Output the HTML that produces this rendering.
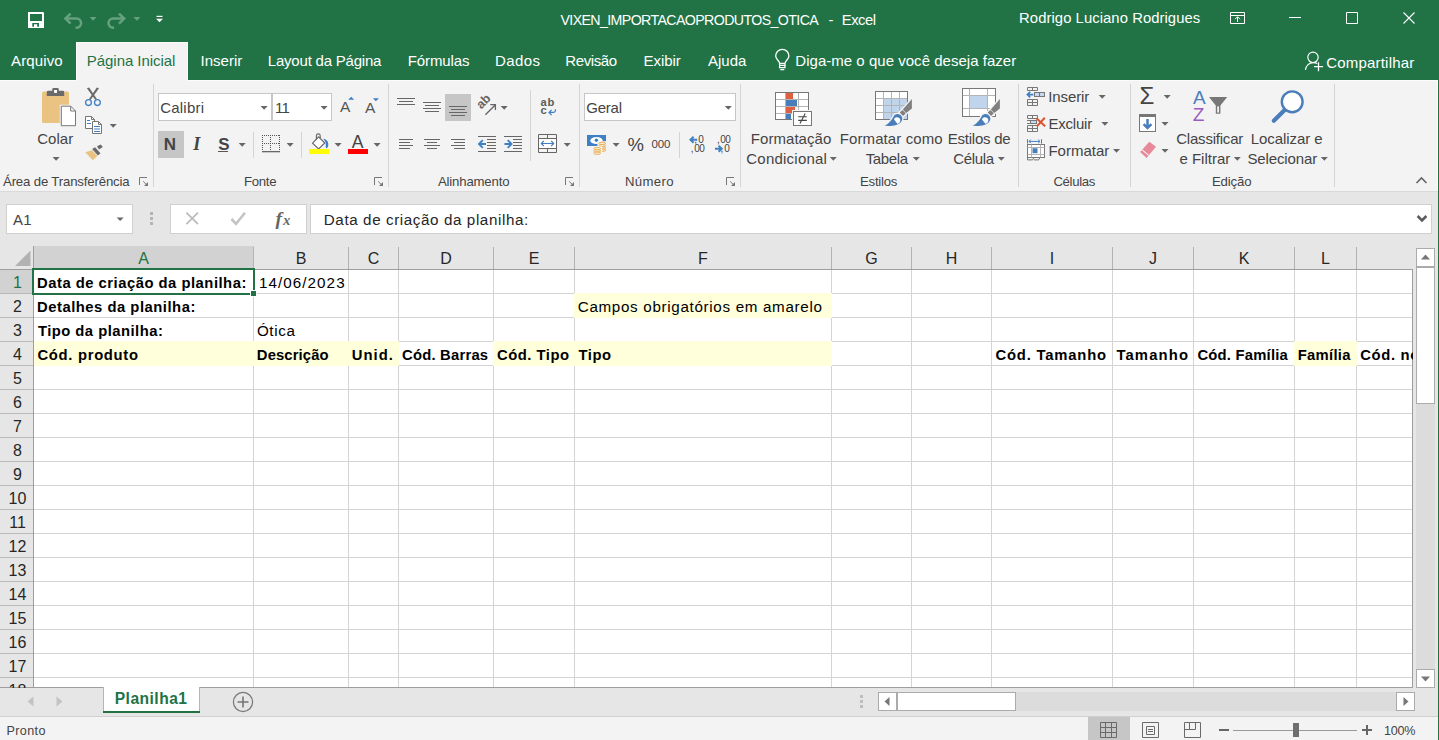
<!DOCTYPE html>
<html lang="pt-BR">
<head>
<meta charset="utf-8">
<title>VIXEN_IMPORTACAOPRODUTOS_OTICA - Excel</title>
<style>
html,body{margin:0;padding:0}
body{width:1439px;height:740px;overflow:hidden;background:#e6e6e6;position:relative;font-family:"Liberation Sans",sans-serif}
#app{position:absolute;left:0;top:0;width:1439px;height:740px;overflow:hidden}
#app div,#app span,#app svg{position:absolute;display:block}
#app span{white-space:pre;line-height:20px;height:20px}
</style>
</head>
<body>
<div id="app">
<div style="left:0px;top:0px;width:1439px;height:80px;background:#217346;"></div>
<div style="left:76px;top:42px;width:112px;height:38px;background:#f3f3f3;"></div>
<div style="left:0px;top:80px;width:1438px;height:111px;background:#f3f3f3;"></div>
<div style="left:0px;top:191px;width:1438px;height:1px;background:#d9d9d9;"></div>
<div style="left:0px;top:80px;width:77px;height:1px;background:#fcfcfc;"></div>
<div style="left:187px;top:80px;width:1251px;height:1px;background:#fcfcfc;"></div>
<div style="left:1437px;top:80px;width:1px;height:111px;background:#fcfcfc;"></div>
<div style="left:76px;top:42px;width:112px;height:1px;background:#fcfcfc;"></div>
<div style="left:76px;top:42px;width:1px;height:39px;background:#fcfcfc;"></div>
<div style="left:187px;top:42px;width:1px;height:39px;background:#fcfcfc;"></div>
<span style="left:560.44px;top:11px;line-height:18px;height:18px;font-size:14.2px;color:#ffffff;letter-spacing:-0.607px;">VIXEN_IMPORTACAOPRODUTOS_OTICA</span>
<span style="left:828.38px;top:11px;line-height:18px;height:18px;font-size:14.8px;color:#ffffff;">-</span>
<span style="left:841.81px;top:11px;line-height:18px;height:18px;font-size:14.8px;color:#ffffff;letter-spacing:-0.507px;">Excel</span>
<span style="left:1019.11px;top:9px;line-height:18px;height:18px;font-size:14.8px;color:#ffffff;letter-spacing:0.073px;">Rodrigo Luciano Rodrigues</span>
<span style="left:11.00px;top:51px;line-height:19px;height:19px;font-size:15px;color:#ffffff;letter-spacing:0.122px;">Arquivo</span>
<span style="left:86.81px;top:51px;line-height:19px;height:19px;font-size:15px;color:#217346;letter-spacing:-0.045px;">Página Inicial</span>
<span style="left:200.62px;top:51px;line-height:19px;height:19px;font-size:15px;color:#ffffff;letter-spacing:-0.009px;">Inserir</span>
<span style="left:267.81px;top:51px;line-height:19px;height:19px;font-size:15px;color:#ffffff;letter-spacing:-0.207px;">Layout da Página</span>
<span style="left:407.81px;top:51px;line-height:19px;height:19px;font-size:15px;color:#ffffff;letter-spacing:-0.118px;">Fórmulas</span>
<span style="left:495.11px;top:51px;line-height:19px;height:19px;font-size:15px;color:#ffffff;letter-spacing:0.357px;">Dados</span>
<span style="left:565.31px;top:51px;line-height:19px;height:19px;font-size:15px;color:#ffffff;letter-spacing:-0.402px;">Revisão</span>
<span style="left:643.51px;top:51px;line-height:19px;height:19px;font-size:15px;color:#ffffff;letter-spacing:-0.055px;">Exibir</span>
<span style="left:707.90px;top:51px;line-height:19px;height:19px;font-size:15px;color:#ffffff;letter-spacing:0.026px;">Ajuda</span>
<span style="left:795.31px;top:51px;line-height:19px;height:19px;font-size:15px;color:#ffffff;letter-spacing:0.027px;">Diga-me o que você deseja fazer</span>
<span style="left:1326.25px;top:53px;line-height:19px;height:19px;font-size:15px;color:#ffffff;letter-spacing:0.194px;">Compartilhar</span>
<div style="left:153px;top:84px;width:1px;height:103px;background:#d4d4d4;"></div>
<div style="left:388px;top:84px;width:1px;height:103px;background:#d4d4d4;"></div>
<div style="left:579px;top:84px;width:1px;height:103px;background:#d4d4d4;"></div>
<div style="left:740px;top:84px;width:1px;height:103px;background:#d4d4d4;"></div>
<div style="left:1018px;top:84px;width:1px;height:103px;background:#d4d4d4;"></div>
<div style="left:1130px;top:84px;width:1px;height:103px;background:#d4d4d4;"></div>
<div style="left:1334px;top:84px;width:1px;height:103px;background:#d4d4d4;"></div>
<div style="left:253px;top:132px;width:1px;height:26px;background:#d4d4d4;"></div>
<div style="left:301px;top:132px;width:1px;height:26px;background:#d4d4d4;"></div>
<div style="left:679px;top:132px;width:1px;height:26px;background:#d4d4d4;"></div>
<div style="left:530px;top:90px;width:1px;height:71px;background:#d4d4d4;"></div>
<span style="left:3.00px;top:173px;line-height:17px;height:17px;font-size:13.2px;color:#444444;letter-spacing:-0.157px;">Área de Transferência</span>
<span style="left:243.94px;top:173px;line-height:17px;height:17px;font-size:13.2px;color:#444444;letter-spacing:-0.290px;">Fonte</span>
<span style="left:438.00px;top:173px;line-height:17px;height:17px;font-size:13.2px;color:#444444;letter-spacing:-0.185px;">Alinhamento</span>
<span style="left:624.94px;top:173px;line-height:17px;height:17px;font-size:13.2px;color:#444444;letter-spacing:0.329px;">Número</span>
<span style="left:859.94px;top:173px;line-height:17px;height:17px;font-size:13.2px;color:#444444;letter-spacing:-0.223px;">Estilos</span>
<span style="left:1053.38px;top:173px;line-height:17px;height:17px;font-size:13.2px;color:#444444;letter-spacing:-0.320px;">Células</span>
<span style="left:1211.94px;top:173px;line-height:17px;height:17px;font-size:13.2px;color:#444444;letter-spacing:-0.153px;">Edição</span>
<span style="left:37.25px;top:129px;line-height:19px;height:19px;font-size:15px;color:#444444;letter-spacing:0.038px;">Colar</span>
<div style="left:158px;top:93px;width:114px;height:28px;background:#fff;border:1px solid #c6c6c6;box-sizing:border-box"></div>
<div style="left:272px;top:93px;width:60px;height:28px;background:#fff;border:1px solid #c6c6c6;box-sizing:border-box"></div>
<span style="left:160.25px;top:98px;line-height:19px;height:19px;font-size:15px;color:#444444;letter-spacing:0.200px;">Calibri</span>
<span style="left:274.88px;top:98px;line-height:19px;height:19px;font-size:15px;color:#444444;letter-spacing:-0.729px;">11</span>
<div style="left:158px;top:131px;width:26px;height:27px;background:#c6c6c6;"></div>
<span style="left:163.74px;top:134px;line-height:21px;height:21px;font-size:17px;color:#444;font-weight:700;">N</span>
<span style="left:193.28px;top:133px;line-height:22px;height:22px;font-size:18px;color:#444;font-weight:700;font-style:italic;font-family:'Liberation Serif',serif;">I</span>
<span style="left:218.33px;top:134px;line-height:21px;height:21px;font-size:17px;color:#444;font-weight:700;">S</span>
<div style="left:218px;top:151px;width:10px;height:1.3px;background:#555;"></div>
<div style="left:445px;top:94px;width:26px;height:27px;background:#c6c6c6;"></div>
<div style="left:584px;top:93px;width:152px;height:28px;background:#fff;border:1px solid #c6c6c6;box-sizing:border-box"></div>
<span style="left:586.25px;top:98px;line-height:19px;height:19px;font-size:15px;color:#444444;letter-spacing:-0.243px;">Geral</span>
<span style="left:627.42px;top:133px;line-height:23px;height:23px;font-size:18.5px;color:#444444;">%</span>
<span style="left:651.56px;top:137px;line-height:14px;height:14px;font-size:11.5px;color:#444444;letter-spacing:-0.177px;">000</span>
<span style="left:750.81px;top:129px;line-height:19px;height:19px;font-size:15px;color:#444444;letter-spacing:0.050px;">Formatação</span>
<span style="left:746.25px;top:149px;line-height:19px;height:19px;font-size:15px;color:#444444;letter-spacing:0.232px;">Condicional</span>
<span style="left:839.81px;top:129px;line-height:19px;height:19px;font-size:15px;color:#444444;letter-spacing:0.091px;">Formatar como</span>
<span style="left:865.69px;top:149px;line-height:19px;height:19px;font-size:15px;color:#444444;letter-spacing:-0.384px;">Tabela</span>
<span style="left:947.81px;top:129px;line-height:19px;height:19px;font-size:15px;color:#444444;letter-spacing:-0.243px;">Estilos de</span>
<span style="left:953.25px;top:149px;line-height:19px;height:19px;font-size:15px;color:#444444;letter-spacing:-0.361px;">Célula</span>
<span style="left:1048.22px;top:87px;line-height:19px;height:19px;font-size:15px;color:#444444;letter-spacing:-0.109px;">Inserir</span>
<span style="left:1048.41px;top:114px;line-height:19px;height:19px;font-size:15px;color:#444444;letter-spacing:-0.196px;">Excluir</span>
<span style="left:1048.41px;top:141px;line-height:19px;height:19px;font-size:15px;color:#444444;">Formatar</span>
<span style="left:1176.25px;top:129px;line-height:19px;height:19px;font-size:15px;color:#444444;letter-spacing:-0.218px;">Classificar</span>
<span style="left:1179.38px;top:149px;line-height:19px;height:19px;font-size:15px;color:#444444;">e Filtrar</span>
<span style="left:1250.81px;top:129px;line-height:19px;height:19px;font-size:15px;color:#444444;letter-spacing:-0.070px;">Localizar e</span>
<span style="left:1247.38px;top:149px;line-height:19px;height:19px;font-size:15px;color:#444444;letter-spacing:-0.112px;">Selecionar</span>
<div style="left:6px;top:204px;width:127px;height:30px;background:#fff;border:1px solid #d0d0d0;box-sizing:border-box"></div>
<div style="left:170px;top:204px;width:137px;height:30px;background:#fff;border:1px solid #d0d0d0;box-sizing:border-box"></div>
<div style="left:310px;top:204px;width:1122px;height:30px;background:#fff;border:1px solid #d0d0d0;box-sizing:border-box"></div>
<span style="left:13.00px;top:210px;line-height:19px;height:19px;font-size:15px;color:#444444;letter-spacing:0.370px;">A1</span>
<span style="left:323.81px;top:210px;line-height:19px;height:19px;font-size:15.2px;color:#262626;letter-spacing:0.597px;">Data de criação da planilha:</span>
<div style="left:150px;top:212px;width:3px;height:3px;background:#b4b4b4;"></div>
<div style="left:150px;top:217px;width:3px;height:3px;background:#b4b4b4;"></div>
<div style="left:150px;top:222px;width:3px;height:3px;background:#b4b4b4;"></div>
<div style="left:34px;top:270px;width:1378px;height:417px;background:#fff;"></div>
<div style="left:253px;top:270px;width:1px;height:417px;background:#d4d4d4;"></div>
<div style="left:348px;top:270px;width:1px;height:417px;background:#d4d4d4;"></div>
<div style="left:398px;top:270px;width:1px;height:417px;background:#d4d4d4;"></div>
<div style="left:493px;top:270px;width:1px;height:417px;background:#d4d4d4;"></div>
<div style="left:574px;top:270px;width:1px;height:417px;background:#d4d4d4;"></div>
<div style="left:831px;top:270px;width:1px;height:417px;background:#d4d4d4;"></div>
<div style="left:911px;top:270px;width:1px;height:417px;background:#d4d4d4;"></div>
<div style="left:991px;top:270px;width:1px;height:417px;background:#d4d4d4;"></div>
<div style="left:1112px;top:270px;width:1px;height:417px;background:#d4d4d4;"></div>
<div style="left:1193px;top:270px;width:1px;height:417px;background:#d4d4d4;"></div>
<div style="left:1294px;top:270px;width:1px;height:417px;background:#d4d4d4;"></div>
<div style="left:1356px;top:270px;width:1px;height:417px;background:#d4d4d4;"></div>
<div style="left:34px;top:293px;width:1378px;height:1px;background:#d4d4d4;"></div>
<div style="left:34px;top:317px;width:1378px;height:1px;background:#d4d4d4;"></div>
<div style="left:34px;top:341px;width:1378px;height:1px;background:#d4d4d4;"></div>
<div style="left:34px;top:365px;width:1378px;height:1px;background:#d4d4d4;"></div>
<div style="left:34px;top:389px;width:1378px;height:1px;background:#d4d4d4;"></div>
<div style="left:34px;top:413px;width:1378px;height:1px;background:#d4d4d4;"></div>
<div style="left:34px;top:437px;width:1378px;height:1px;background:#d4d4d4;"></div>
<div style="left:34px;top:461px;width:1378px;height:1px;background:#d4d4d4;"></div>
<div style="left:34px;top:485px;width:1378px;height:1px;background:#d4d4d4;"></div>
<div style="left:34px;top:509px;width:1378px;height:1px;background:#d4d4d4;"></div>
<div style="left:34px;top:533px;width:1378px;height:1px;background:#d4d4d4;"></div>
<div style="left:34px;top:557px;width:1378px;height:1px;background:#d4d4d4;"></div>
<div style="left:34px;top:581px;width:1378px;height:1px;background:#d4d4d4;"></div>
<div style="left:34px;top:605px;width:1378px;height:1px;background:#d4d4d4;"></div>
<div style="left:34px;top:629px;width:1378px;height:1px;background:#d4d4d4;"></div>
<div style="left:34px;top:653px;width:1378px;height:1px;background:#d4d4d4;"></div>
<div style="left:34px;top:677px;width:1378px;height:1px;background:#d4d4d4;"></div>
<div style="left:33px;top:341px;width:366px;height:25px;background:#ffffdc;"></div>
<div style="left:493px;top:341px;width:339px;height:25px;background:#ffffdc;"></div>
<div style="left:574px;top:293px;width:258px;height:25px;background:#ffffdc;"></div>
<div style="left:1294px;top:341px;width:63px;height:25px;background:#ffffdc;"></div>
<div style="left:33px;top:341px;width:1px;height:25px;background:#9e9e9e;"></div>
<div style="left:34px;top:246px;width:220px;height:22px;background:#d2d2d2;"></div>
<div style="left:0px;top:270px;width:33px;height:23px;background:#d2d2d2;"></div>
<div style="left:0px;top:269px;width:1413px;height:1px;background:#9e9e9e;"></div>
<div style="left:33px;top:246px;width:1px;height:441px;background:#9e9e9e;"></div>
<div style="left:253px;top:247px;width:1px;height:22px;background:#b3b3b3;"></div>
<div style="left:348px;top:247px;width:1px;height:22px;background:#b3b3b3;"></div>
<div style="left:398px;top:247px;width:1px;height:22px;background:#b3b3b3;"></div>
<div style="left:493px;top:247px;width:1px;height:22px;background:#b3b3b3;"></div>
<div style="left:574px;top:247px;width:1px;height:22px;background:#b3b3b3;"></div>
<div style="left:831px;top:247px;width:1px;height:22px;background:#b3b3b3;"></div>
<div style="left:911px;top:247px;width:1px;height:22px;background:#b3b3b3;"></div>
<div style="left:991px;top:247px;width:1px;height:22px;background:#b3b3b3;"></div>
<div style="left:1112px;top:247px;width:1px;height:22px;background:#b3b3b3;"></div>
<div style="left:1193px;top:247px;width:1px;height:22px;background:#b3b3b3;"></div>
<div style="left:1294px;top:247px;width:1px;height:22px;background:#b3b3b3;"></div>
<div style="left:1356px;top:247px;width:1px;height:22px;background:#b3b3b3;"></div>
<div style="left:0px;top:293px;width:33px;height:1px;background:#b9b9b9;"></div>
<div style="left:0px;top:317px;width:33px;height:1px;background:#b9b9b9;"></div>
<div style="left:0px;top:341px;width:33px;height:1px;background:#b9b9b9;"></div>
<div style="left:0px;top:365px;width:33px;height:1px;background:#b9b9b9;"></div>
<div style="left:0px;top:389px;width:33px;height:1px;background:#b9b9b9;"></div>
<div style="left:0px;top:413px;width:33px;height:1px;background:#b9b9b9;"></div>
<div style="left:0px;top:437px;width:33px;height:1px;background:#b9b9b9;"></div>
<div style="left:0px;top:461px;width:33px;height:1px;background:#b9b9b9;"></div>
<div style="left:0px;top:485px;width:33px;height:1px;background:#b9b9b9;"></div>
<div style="left:0px;top:509px;width:33px;height:1px;background:#b9b9b9;"></div>
<div style="left:0px;top:533px;width:33px;height:1px;background:#b9b9b9;"></div>
<div style="left:0px;top:557px;width:33px;height:1px;background:#b9b9b9;"></div>
<div style="left:0px;top:581px;width:33px;height:1px;background:#b9b9b9;"></div>
<div style="left:0px;top:605px;width:33px;height:1px;background:#b9b9b9;"></div>
<div style="left:0px;top:629px;width:33px;height:1px;background:#b9b9b9;"></div>
<div style="left:0px;top:653px;width:33px;height:1px;background:#b9b9b9;"></div>
<div style="left:0px;top:677px;width:33px;height:1px;background:#b9b9b9;"></div>
<div style="left:1412px;top:269px;width:1px;height:418px;background:#9e9e9e;"></div>
<div style="left:0px;top:687px;width:1413px;height:1px;background:#9e9e9e;"></div>
<svg style="left:14px;top:250px;" width="17" height="17" viewBox="0 0 17 17"><path d="M16.5 0.5V16H1z" fill="#b2b2b2"/></svg>
<span style="left:123.5px;top:249px;width:40px;text-align:center;font-size:16px;line-height:20px;color:#217346">A</span>
<span style="left:281.0px;top:249px;width:40px;text-align:center;font-size:16px;line-height:20px;color:#262626">B</span>
<span style="left:353.5px;top:249px;width:40px;text-align:center;font-size:16px;line-height:20px;color:#262626">C</span>
<span style="left:426.0px;top:249px;width:40px;text-align:center;font-size:16px;line-height:20px;color:#262626">D</span>
<span style="left:514.0px;top:249px;width:40px;text-align:center;font-size:16px;line-height:20px;color:#262626">E</span>
<span style="left:683.0px;top:249px;width:40px;text-align:center;font-size:16px;line-height:20px;color:#262626">F</span>
<span style="left:851.5px;top:249px;width:40px;text-align:center;font-size:16px;line-height:20px;color:#262626">G</span>
<span style="left:931.5px;top:249px;width:40px;text-align:center;font-size:16px;line-height:20px;color:#262626">H</span>
<span style="left:1032.0px;top:249px;width:40px;text-align:center;font-size:16px;line-height:20px;color:#262626">I</span>
<span style="left:1133.0px;top:249px;width:40px;text-align:center;font-size:16px;line-height:20px;color:#262626">J</span>
<span style="left:1224.0px;top:249px;width:40px;text-align:center;font-size:16px;line-height:20px;color:#262626">K</span>
<span style="left:1305.5px;top:249px;width:40px;text-align:center;font-size:16px;line-height:20px;color:#262626">L</span>
<span style="left:1px;top:273px;width:33px;text-align:center;font-size:16px;line-height:20px;color:#217346">1</span>
<span style="left:1px;top:297px;width:33px;text-align:center;font-size:16px;line-height:20px;color:#262626">2</span>
<span style="left:1px;top:321px;width:33px;text-align:center;font-size:16px;line-height:20px;color:#262626">3</span>
<span style="left:1px;top:345px;width:33px;text-align:center;font-size:16px;line-height:20px;color:#262626">4</span>
<span style="left:1px;top:369px;width:33px;text-align:center;font-size:16px;line-height:20px;color:#262626">5</span>
<span style="left:1px;top:393px;width:33px;text-align:center;font-size:16px;line-height:20px;color:#262626">6</span>
<span style="left:1px;top:417px;width:33px;text-align:center;font-size:16px;line-height:20px;color:#262626">7</span>
<span style="left:1px;top:441px;width:33px;text-align:center;font-size:16px;line-height:20px;color:#262626">8</span>
<span style="left:1px;top:465px;width:33px;text-align:center;font-size:16px;line-height:20px;color:#262626">9</span>
<span style="left:1px;top:489px;width:33px;text-align:center;font-size:16px;line-height:20px;color:#262626">10</span>
<span style="left:1px;top:513px;width:33px;text-align:center;font-size:16px;line-height:20px;color:#262626">11</span>
<span style="left:1px;top:537px;width:33px;text-align:center;font-size:16px;line-height:20px;color:#262626">12</span>
<span style="left:1px;top:561px;width:33px;text-align:center;font-size:16px;line-height:20px;color:#262626">13</span>
<span style="left:1px;top:585px;width:33px;text-align:center;font-size:16px;line-height:20px;color:#262626">14</span>
<span style="left:1px;top:609px;width:33px;text-align:center;font-size:16px;line-height:20px;color:#262626">15</span>
<span style="left:1px;top:633px;width:33px;text-align:center;font-size:16px;line-height:20px;color:#262626">16</span>
<span style="left:1px;top:657px;width:33px;text-align:center;font-size:16px;line-height:20px;color:#262626">17</span>
<span style="left:1px;top:681px;width:33px;text-align:center;font-size:16px;line-height:20px;color:#262626">18</span>
<div style="left:34px;top:268px;width:220px;height:2px;background:#217346;"></div>
<div style="left:32px;top:270px;width:2px;height:24px;background:#217346;"></div>
<div style="left:32px;top:268px;width:223px;height:27px;border:2px solid #217346;box-sizing:border-box"></div>
<div style="left:250px;top:290px;width:7px;height:7px;background:#fff;"></div>
<div style="left:251px;top:291px;width:5px;height:5px;background:#217346;"></div>
<span style="left:37.06px;top:274px;line-height:18px;height:18px;font-size:14.8px;color:#000;font-weight:700;letter-spacing:0.502px;">Data de criação da planilha:</span>
<span style="left:258.88px;top:273px;line-height:19px;height:19px;font-size:15.2px;color:#000;letter-spacing:1.077px;">14/06/2023</span>
<span style="left:37.06px;top:298px;line-height:18px;height:18px;font-size:14.8px;color:#000;font-weight:700;letter-spacing:0.513px;">Detalhes da planilha:</span>
<span style="left:577.75px;top:297px;line-height:19px;height:19px;font-size:15.2px;color:#000;letter-spacing:0.677px;">Campos obrigatórios em amarelo</span>
<span style="left:37.88px;top:322px;line-height:18px;height:18px;font-size:14.8px;color:#000;font-weight:700;letter-spacing:0.480px;">Tipo da planilha:</span>
<span style="left:256.91px;top:321px;line-height:19px;height:19px;font-size:15.2px;color:#000;letter-spacing:0.641px;">Ótica</span>
<span style="left:37.44px;top:346px;line-height:18px;height:18px;font-size:14.8px;color:#000;font-weight:700;letter-spacing:0.702px;">Cód. produto</span>
<span style="left:256.86px;top:346px;line-height:18px;height:18px;font-size:14.8px;color:#000;font-weight:700;letter-spacing:0.115px;">Descrição</span>
<span style="left:351.73px;top:346px;line-height:18px;height:18px;font-size:14.8px;color:#000;font-weight:700;letter-spacing:1.067px;">Unid.</span>
<span style="left:402.04px;top:346px;line-height:18px;height:18px;font-size:14.8px;color:#000;font-weight:700;letter-spacing:0.218px;">Cód. Barras</span>
<span style="left:496.94px;top:346px;line-height:18px;height:18px;font-size:14.8px;color:#000;font-weight:700;letter-spacing:0.518px;">Cód. Tipo</span>
<span style="left:578.38px;top:346px;line-height:18px;height:18px;font-size:14.8px;color:#000;font-weight:700;letter-spacing:0.600px;">Tipo</span>
<span style="left:995.44px;top:346px;line-height:18px;height:18px;font-size:14.8px;color:#000;font-weight:700;letter-spacing:0.811px;">Cód. Tamanho</span>
<span style="left:1116.38px;top:346px;line-height:18px;height:18px;font-size:14.8px;color:#000;font-weight:700;letter-spacing:1.164px;">Tamanho</span>
<span style="left:1197.44px;top:346px;line-height:18px;height:18px;font-size:14.8px;color:#000;font-weight:700;letter-spacing:0.221px;">Cód. Família</span>
<span style="left:1297.66px;top:346px;line-height:18px;height:18px;font-size:14.8px;color:#000;font-weight:700;letter-spacing:0.299px;">Família</span>
<span style="left:1360.14px;top:346px;line-height:18px;height:18px;font-size:14.8px;color:#000;font-weight:700;letter-spacing:0.685px;">Cód. nome</span>
<div style="left:1413px;top:270px;width:25px;height:417px;background:#e6e6e6;"></div>
<div style="left:0px;top:688px;width:1438px;height:29px;background:#e6e6e6;"></div>
<div style="left:1416px;top:267px;width:19px;height:402px;background:#dcdcdc;"></div>
<div style="left:1416px;top:248px;width:19px;height:19px;background:#fff;border:1px solid #ababab;box-sizing:border-box"></div>
<div style="left:1416px;top:267px;width:19px;height:137px;background:#fff;border:1px solid #ababab;box-sizing:border-box"></div>
<div style="left:1416px;top:669px;width:19px;height:19px;background:#fff;border:1px solid #ababab;box-sizing:border-box"></div>
<svg style="left:1421px;top:254px;" width="9" height="6" viewBox="0 0 9 6"><path d="M0 5.5h9L4.5 0.5z" fill="#777"/></svg>
<svg style="left:1421px;top:676px;" width="9" height="6" viewBox="0 0 9 6"><path d="M0 0.5h9L4.5 5.5z" fill="#777"/></svg>
<div style="left:104px;top:687px;width:96px;height:26px;background:#fff;"></div>
<div style="left:103px;top:687px;width:1px;height:26px;background:#b5b5b5;"></div>
<div style="left:199px;top:687px;width:1px;height:26px;background:#b5b5b5;"></div>
<div style="left:103px;top:711px;width:97px;height:2px;background:#217346;"></div>
<span style="left:114.70px;top:689px;line-height:19px;height:19px;font-size:15.6px;color:#217346;font-weight:700;letter-spacing:0.479px;">Planilha1</span>
<svg style="left:27px;top:696px;" width="7" height="11" viewBox="0 0 7 11"><path d="M6.5 0.5v10L0.5 5.5z" fill="#c3c3c3"/></svg>
<svg style="left:56px;top:696px;" width="7" height="11" viewBox="0 0 7 11"><path d="M0.5 0.5v10L6.5 5.5z" fill="#c3c3c3"/></svg>
<svg style="left:232px;top:691px;" width="22" height="22" viewBox="0 0 22 22"><circle cx="11" cy="11" r="9.6" fill="none" stroke="#767676" stroke-width="1.2"/><path d="M5.5 11h11M11 5.5v11" stroke="#767676" stroke-width="1.6"/></svg>
<div style="left:860px;top:695px;width:3px;height:3px;background:#bdbdbd;"></div>
<div style="left:860px;top:700px;width:3px;height:3px;background:#bdbdbd;"></div>
<div style="left:860px;top:705px;width:3px;height:3px;background:#bdbdbd;"></div>
<div style="left:878px;top:692px;width:537px;height:19px;background:#dcdcdc;"></div>
<div style="left:878px;top:692px;width:19px;height:19px;background:#fff;border:1px solid #ababab;box-sizing:border-box"></div>
<div style="left:897px;top:692px;width:119px;height:19px;background:#fff;border:1px solid #ababab;box-sizing:border-box"></div>
<div style="left:1396px;top:692px;width:19px;height:19px;background:#fff;border:1px solid #ababab;box-sizing:border-box"></div>
<svg style="left:884px;top:697px;" width="6" height="9" viewBox="0 0 6 9"><path d="M5.5 0v9L0.5 4.5z" fill="#777"/></svg>
<svg style="left:1403px;top:697px;" width="6" height="9" viewBox="0 0 6 9"><path d="M0.5 0v9L5.5 4.5z" fill="#777"/></svg>
<div style="left:0px;top:716px;width:1438px;height:1px;background:#d0d0d0;"></div>
<div style="left:0px;top:717px;width:1438px;height:23px;background:#f3f3f3;"></div>
<span style="left:6.50px;top:723px;line-height:16px;height:16px;font-size:12.6px;color:#444444;letter-spacing:0.377px;">Pronto</span>
<div style="left:1088px;top:717px;width:42px;height:23px;background:#c6c6c6;"></div>
<span style="left:1384.06px;top:723px;line-height:16px;height:16px;font-size:12.6px;color:#444444;letter-spacing:-0.299px;">100%</span>
<div style="left:1219px;top:729px;width:10px;height:2px;background:#666;"></div>
<div style="left:1233px;top:730px;width:124px;height:1px;background:#9a9a9a;"></div>
<div style="left:1293px;top:723px;width:6px;height:14px;background:#6e6e6e;"></div>
<div style="left:1362px;top:729px;width:10px;height:2px;background:#666;"></div>
<div style="left:1366px;top:725px;width:2px;height:10px;background:#666;"></div>
<span style="left:340.00px;top:97px;line-height:19px;height:19px;font-size:15.5px;color:#555;">A</span>
<span style="left:365.00px;top:98px;line-height:19px;height:19px;font-size:15.5px;color:#555;">A</span>
<span style="left:351.70px;top:131px;line-height:22px;height:22px;font-size:17.6px;color:#444;">A</span>
<span style="left:540.49px;top:95px;line-height:14px;height:14px;font-size:11.2px;color:#5c5c5c;font-weight:700;letter-spacing:0.847px;">ab</span>
<span style="left:540.56px;top:103px;line-height:14px;height:14px;font-size:11.2px;color:#5c5c5c;font-weight:700;">c</span>
<span style="left:698.23px;top:133px;line-height:13px;height:13px;font-size:10px;color:#444;">0</span>
<span style="left:694.33px;top:133px;line-height:13px;height:13px;font-size:10px;color:#444;">,</span>
<span style="left:694.23px;top:142px;line-height:13px;height:13px;font-size:10px;color:#444;letter-spacing:-0.6px;">00</span>
<span style="left:690.73px;top:142px;line-height:13px;height:13px;font-size:10px;color:#444;">,</span>
<span style="left:720.23px;top:133px;line-height:13px;height:13px;font-size:10px;color:#444;letter-spacing:-0.6px;">00</span>
<span style="left:716.92px;top:133px;line-height:13px;height:13px;font-size:10px;color:#444;">,</span>
<span style="left:724.23px;top:142px;line-height:13px;height:13px;font-size:10px;color:#444;">0</span>
<span style="left:720.52px;top:142px;line-height:13px;height:13px;font-size:10px;color:#444;">,</span>
<span style="left:1139.47px;top:81px;line-height:29px;height:29px;font-size:24px;color:#444;">Σ</span>
<span style="left:1193.00px;top:86px;line-height:23px;height:23px;font-size:19px;color:#4a7ebb;">A</span>
<span style="left:1192.81px;top:103px;line-height:23px;height:23px;font-size:19px;color:#9a5bc0;">Z</span>
<span style="left:275.50px;top:207px;line-height:23px;height:23px;font-size:19.5px;color:#666;font-weight:700;font-style:italic;font-family:'Liberation Serif',serif;">f</span>
<span style="left:283.19px;top:212px;line-height:17px;height:17px;font-size:14px;color:#666;font-weight:700;font-style:italic;font-family:'Liberation Serif',serif;">x</span>
<svg style="left:0;top:0" width="1439" height="740" viewBox="0 0 1439 740"><path d="M28 12h15.2l0.8 0.8V28H28z M30 14v7h12v-7z M32.3 23v3.8h1.7V24.3h3.2v2.5h1.8V23z" fill="#fff" fill-rule="evenodd"/><path d="M70.6 13.6L65.4 18.6l5.2 5 M65.8 18.6h10.7a4.6 4.6 0 0 1 0 9.2h-1" fill="none" stroke="#65a17f" stroke-width="2.5" /><path d="M89.6 17h7l-3.5 3.7z" fill="#65a17f" /><path d="M119 13.6l5.2 5-5.2 5 M123.8 18.6h-10.7a4.6 4.6 0 0 0 0 9.2h1" fill="none" stroke="#65a17f" stroke-width="2.5" /><path d="M133.4 17h7l-3.5 3.7z" fill="#65a17f" /><rect x="156.5" y="15.8" width="6" height="1.2" fill="#fff" /><path d="M156 18.8h7l-3.5 3.4z" fill="#fff" /><path d="M1230.5 12.5h14v11h-14z M1230.5 15.5h14" fill="none" stroke="#fff" stroke-width="1" /><path d="M1237.5 22v-5 M1235 19.2l2.5-2.5 2.5 2.5" fill="none" stroke="#fff" stroke-width="1" /><rect x="1289" y="17" width="12" height="1" fill="#fff" /><path d="M1346.5 12.5h11v11h-11z" fill="none" stroke="#fff" stroke-width="1" /><path d="M1403.5 12.5l11 11 M1414.5 12.5l-11 11" fill="none" stroke="#fff" stroke-width="1.1" /><path d="M779.6 63.4c0-2.6-3.9-4-3.9-7.4a6.6 6.6 0 0 1 13.2 0c0 3.4-3.9 4.8-3.9 7.4z M779.6 63.4v4.2h5.4v-4.2 M779.6 65.4h5.4 M780.3 69.6h4" fill="none" stroke="#fff" stroke-width="1.3" /><circle cx="1313" cy="57.3" r="5.2" fill="none" stroke="#fff" stroke-width="1.2"/><path d="M1305.4 70c0.4-4.6 4-7.4 7.8-7.4 1.6 0 3 0.4 4 1" fill="none" stroke="#fff" stroke-width="1.2" /><path d="M1314 66.6h9 M1318.5 62.2v9" fill="none" stroke="#fff" stroke-width="1.3" /><rect x="42" y="91.6" width="27" height="31.4" fill="#eac282" rx="1.6"/><path d="M46.8 96V92.2q0-1.4 1.4-1.4h4v-1.4q0-1.4 1.4-1.4h3.8q1.4 0 1.4 1.4v1.4h4q1.4 0 1.4 1.4V96z M54.2 90h2.8v2.8h-2.8z" fill="#6a6a6a" fill-rule="evenodd"/><rect x="54.2" y="90" width="2.8" height="2.8" fill="#fff" /><path d="M59.8 104.8h11.6l5.4 5.4v17H59.8z" fill="#f3f3f3" /><path d="M61.3 106.2h9.4l4.8 4.8v14.7H61.3z" fill="#fff" stroke="#767676" stroke-width="1" /><path d="M70.7 106.2v4.8h4.8" fill="none" stroke="#767676" stroke-width="1" /><path d="M52.6 157h7l-3.5 3.7z" fill="#666" /><path d="M86.9 88.3l2.2-0.8 7.8 11.4-1.5 1z" fill="#6a6a6a" /><path d="M99 88.3l-2.2-0.8-7.8 11.4 1.5 1z" fill="#6a6a6a" /><circle cx="88.5" cy="102.6" r="2.9" fill="none" stroke="#3f7fc3" stroke-width="1.3"/><circle cx="97.4" cy="102.6" r="2.9" fill="none" stroke="#3f7fc3" stroke-width="1.3"/><path d="M85.5 116.5h6l3 3v9h-9z" fill="#fff" stroke="#767676" stroke-width="1" /><path d="M91.5 116.5v3h3" fill="none" stroke="#767676" stroke-width="1" /><path d="M87 120.5h3 M87 123.5h4" fill="none" stroke="#3f7fc3" stroke-width="1" /><path d="M92.5 121.5h6l3 3v9h-9z" fill="#fff" stroke="#767676" stroke-width="1" /><path d="M98.5 121.5v3h3" fill="none" stroke="#767676" stroke-width="1" /><path d="M94 126.5h6 M94 129h6 M94 131.5h6" fill="none" stroke="#3f7fc3" stroke-width="1" /><path d="M109.7 124h7l-3.5 3.7z" fill="#666" /><path d="M85.2 152.3l6.9-2.1 5.2 5.7-4.5 4.3z" fill="#eac282" /><path d="M92.1 148.9l3-1.7 5.4 6-2.7 2.2z" fill="#6a6a6a" /><path d="M97 146.2l3.8-1.8 2 2.6-3.8 2.5z" fill="#6a6a6a" /><path d="M260.6 106h7l-3.5 3.7z" fill="#666" /><path d="M320.6 106h7l-3.5 3.7z" fill="#666" /><path d="M348.2 99.8l3-3 3 3z" fill="#3f7fc3" /><path d="M372.9 98.2h6l-3 3z" fill="#3f7fc3" /><path d="M238.7 143h7l-3.5 3.7z" fill="#666" /><path d="M286.6 143h7l-3.5 3.7z" fill="#666" /><path d="M334.6 143h7l-3.5 3.7z" fill="#666" /><path d="M373.6 143h7l-3.5 3.7z" fill="#666" /><path d="M262 135.5h18 M262 143.5h18" fill="none" stroke="#555" stroke-width="1" stroke-dasharray="1 1" shape-rendering="crispEdges"/><path d="M262.5 135v16 M270.5 135v16 M279.5 135v16" fill="none" stroke="#555" stroke-width="1" stroke-dasharray="1 1" shape-rendering="crispEdges"/><rect x="262" y="151" width="18" height="1.3" fill="#666" /><path d="M312.6 143.2l6-6.4 6.2 6.2-6.2 6z" fill="#fff" stroke="#666" stroke-width="1.1" /><path d="M316.4 140v-4.2a1.9 1.9 0 0 1 3.8 0v2.6" fill="none" stroke="#666" stroke-width="1.1" /><path d="M323.2 138.8c3.6 0.4 5.6 3.2 5 7-0.3 1.6-1 2.4-1.7 2.4-0.7 0-0.9-1-0.7-2.4 0.4-2.8-0.6-4.8-2.6-7z" fill="#3f7fc3" /><rect x="309" y="149" width="20" height="5" fill="#ffff00" /><rect x="348" y="149" width="20" height="5" fill="#ff0000" /><rect x="397" y="98" width="18" height="1" fill="#666" shape-rendering="crispEdges"/><rect x="399" y="101" width="14" height="1" fill="#666" shape-rendering="crispEdges"/><rect x="397" y="104" width="18" height="1" fill="#666" shape-rendering="crispEdges"/><rect x="423" y="102" width="18" height="1" fill="#666" shape-rendering="crispEdges"/><rect x="425" y="105" width="14" height="1" fill="#666" shape-rendering="crispEdges"/><rect x="423" y="108" width="18" height="1" fill="#666" shape-rendering="crispEdges"/><rect x="425" y="111" width="14" height="1" fill="#666" shape-rendering="crispEdges"/><rect x="449" y="106" width="18" height="1" fill="#666" shape-rendering="crispEdges"/><rect x="451" y="109" width="14" height="1" fill="#666" shape-rendering="crispEdges"/><rect x="449" y="112" width="18" height="1" fill="#666" shape-rendering="crispEdges"/><rect x="451" y="115" width="14" height="1" fill="#666" shape-rendering="crispEdges"/><rect x="399" y="139" width="14" height="1" fill="#666" shape-rendering="crispEdges"/><rect x="399" y="142" width="11" height="1" fill="#666" shape-rendering="crispEdges"/><rect x="399" y="145" width="14" height="1" fill="#666" shape-rendering="crispEdges"/><rect x="399" y="148" width="11" height="1" fill="#666" shape-rendering="crispEdges"/><rect x="424" y="139" width="16" height="1" fill="#666" shape-rendering="crispEdges"/><rect x="427" y="142" width="10" height="1" fill="#666" shape-rendering="crispEdges"/><rect x="424" y="145" width="16" height="1" fill="#666" shape-rendering="crispEdges"/><rect x="427" y="148" width="10" height="1" fill="#666" shape-rendering="crispEdges"/><rect x="451" y="139" width="14" height="1" fill="#666" shape-rendering="crispEdges"/><rect x="454" y="142" width="11" height="1" fill="#666" shape-rendering="crispEdges"/><rect x="451" y="145" width="14" height="1" fill="#666" shape-rendering="crispEdges"/><rect x="454" y="148" width="11" height="1" fill="#666" shape-rendering="crispEdges"/><text x="0" y="0" transform="translate(481.2 109.4) rotate(-45)" font-family="Liberation Sans, sans-serif" font-size="12.5" font-weight="700" fill="#666">ab</text><path d="M485.4 114.8l9.8-9.8 M490.2 104.7h5.2v5.2" fill="none" stroke="#666" stroke-width="1.3" /><path d="M500.7 106h7l-3.5 3.7z" fill="#666" /><rect x="478" y="136" width="18" height="1" fill="#666" shape-rendering="crispEdges"/><rect x="487" y="139" width="9" height="1" fill="#666" shape-rendering="crispEdges"/><rect x="487" y="142" width="9" height="1" fill="#666" shape-rendering="crispEdges"/><rect x="487" y="145" width="9" height="1" fill="#666" shape-rendering="crispEdges"/><rect x="487" y="148" width="9" height="1" fill="#666" shape-rendering="crispEdges"/><rect x="478" y="151" width="18" height="1" fill="#666" shape-rendering="crispEdges"/><path d="M486 144h-6.5 M482.8 140.2l-3.8 3.8 3.8 3.8" fill="none" stroke="#3f7fc3" stroke-width="1.9" /><rect x="504" y="136" width="18" height="1" fill="#666" shape-rendering="crispEdges"/><rect x="513" y="139" width="9" height="1" fill="#666" shape-rendering="crispEdges"/><rect x="513" y="142" width="9" height="1" fill="#666" shape-rendering="crispEdges"/><rect x="513" y="145" width="9" height="1" fill="#666" shape-rendering="crispEdges"/><rect x="513" y="148" width="9" height="1" fill="#666" shape-rendering="crispEdges"/><rect x="504" y="151" width="18" height="1" fill="#666" shape-rendering="crispEdges"/><path d="M504.5 144h6.5 M507.7 140.2l3.8 3.8-3.8 3.8" fill="none" stroke="#3f7fc3" stroke-width="1.9" /><path d="M555.4 109.2v1.4q0 1.8-1.8 1.8h-4.2 M551.6 109.9l-2.6 2.6 2.6 2.6" fill="none" stroke="#3f7fc3" stroke-width="1.2" /><path d="M538.5 134.5h18v18h-18z M538.5 138.5h18 M538.5 148.5h18 M547.5 134.5v4 M547.5 148.5v4" fill="none" stroke="#666" stroke-width="1" /><rect x="539" y="139" width="17" height="9" fill="#fff" /><path d="M541.4 143.5h12.2 M543.8 141l-2.5 2.5 2.5 2.5 M551.2 141l2.5 2.5-2.5 2.5" fill="none" stroke="#3f7fc3" stroke-width="1.1" /><path d="M563.7 143h7l-3.5 3.7z" fill="#666" /><path d="M724.8 106h7l-3.5 3.7z" fill="#666" /><rect x="587" y="135" width="19" height="11" fill="#3f7fc3" /><ellipse cx="596.5" cy="140.5" rx="6.2" ry="3.6" fill="#fff"/><circle cx="596.4" cy="140.3" r="1.7" fill="#3f7fc3"/><rect x="597.4000000000001" y="141.20000000000002" width="9.6" height="11.6" fill="#f3f3f3" /><ellipse cx="602.2" cy="143.4" rx="3.6" ry="1.15" fill="#f8ead0" stroke="#e3ad55" stroke-width="0.9"/><ellipse cx="602.2" cy="145.70000000000002" rx="3.6" ry="1.15" fill="#f8ead0" stroke="#e3ad55" stroke-width="0.9"/><ellipse cx="602.2" cy="148.0" rx="3.6" ry="1.15" fill="#f8ead0" stroke="#e3ad55" stroke-width="0.9"/><ellipse cx="602.2" cy="150.3" rx="3.6" ry="1.15" fill="#f8ead0" stroke="#e3ad55" stroke-width="0.9"/><rect x="592.4000000000001" y="146.4" width="9.6" height="9.2" fill="#f3f3f3" /><ellipse cx="597.2" cy="148.6" rx="3.6" ry="1.15" fill="#f8ead0" stroke="#e3ad55" stroke-width="0.9"/><ellipse cx="597.2" cy="150.9" rx="3.6" ry="1.15" fill="#f8ead0" stroke="#e3ad55" stroke-width="0.9"/><ellipse cx="597.2" cy="153.2" rx="3.6" ry="1.15" fill="#f8ead0" stroke="#e3ad55" stroke-width="0.9"/><path d="M612.6 143h7l-3.5 3.7z" fill="#666" /><path d="M697.2 139.8h-6.5 M693.6 136.8l-3.2 3 3.2 3" fill="none" stroke="#3f7fc3" stroke-width="1.9" /><path d="M715 148.8h6.5 M718.6 145.8l3.2 3-3.2 3" fill="none" stroke="#3f7fc3" stroke-width="1.9" /><path d="M139.5 185V177.5H147" fill="none" stroke="#777" stroke-width="1" /><path d="M143.2 181.4L146.5 184.7" fill="none" stroke="#777" stroke-width="1" /><path d="M148 182V186H144z" fill="#777" /><path d="M374.5 185V177.5H382" fill="none" stroke="#777" stroke-width="1" /><path d="M378.2 181.4L381.5 184.7" fill="none" stroke="#777" stroke-width="1" /><path d="M383 182V186H379z" fill="#777" /><path d="M565.5 185V177.5H573" fill="none" stroke="#777" stroke-width="1" /><path d="M569.2 181.4L572.5 184.7" fill="none" stroke="#777" stroke-width="1" /><path d="M574 182V186H570z" fill="#777" /><path d="M726.5 185V177.5H734" fill="none" stroke="#777" stroke-width="1" /><path d="M730.2 181.4L733.5 184.7" fill="none" stroke="#777" stroke-width="1" /><path d="M735 182V186H731z" fill="#777" /><rect x="775.5" y="92.5" width="33" height="27" fill="#fff" /><rect x="786" y="93" width="7" height="6" fill="#dd6141" /><rect x="786" y="100" width="11" height="6" fill="#4a7ebb" /><rect x="786" y="107" width="9" height="6" fill="#dd6141" /><rect x="786" y="114" width="5" height="5" fill="#4a7ebb" /><path d="M785.5 93v26 M798.5 93v26 M776 99.5h32 M776 106.5h32 M776 113.5h32" fill="none" stroke="#b4b4b4" stroke-width="1" /><rect x="775.5" y="92.5" width="33" height="27" fill="none" stroke="#777" stroke-width="1" /><rect x="792" y="110" width="21" height="17" fill="#f3f3f3" /><rect x="793.5" y="111.5" width="18" height="14" fill="#fff" stroke="#777" stroke-width="1" /><path d="M798.2 116.8h8.6 M798.2 120.4h8.6 M805.2 113.6l-5.2 9.8" fill="none" stroke="#444" stroke-width="1.1" /><path d="M829.8 157h7l-3.5 3.7z" fill="#666" /><path d="M912.8 157h7l-3.5 3.7z" fill="#666" /><path d="M997.8 157h7l-3.5 3.7z" fill="#666" /><rect x="875.5" y="91.5" width="32" height="28" fill="#fff" /><rect x="884" y="99" width="23" height="20" fill="#c0d5eb" /><path d="M883.5 92v27 M891.5 92v27 M899.5 92v27 M876 98.5h31 M876 105.5h31 M876 112.5h31" fill="none" stroke="#b4b4b4" stroke-width="1" /><rect x="875.5" y="91.5" width="32" height="28" fill="none" stroke="#777" stroke-width="1" /><path d="M884.6 125.8C889 123.5 891.5 120 893.2 117.2A4.7 4.7 0 1 1 901 122C898.5 125.5 892 126.3 884.6 125.8z" fill="#f3f3f3" stroke="#f3f3f3" stroke-width="2.6" /><path d="M911.9 99.1v9.4l-5.7 4.5-3.4-3.5z" fill="#f3f3f3" stroke="#f3f3f3" stroke-width="2.6" /><path d="M902.4 109.9l3.4 3.4-2.7 2.7-3.4-3.4z" fill="#f3f3f3" stroke="#f3f3f3" stroke-width="2.6" /><path d="M911.9 99.1v9.4l-5.7 4.5-3.4-3.5z" fill="#808080" /><path d="M902.4 109.9l3.4 3.4-2.7 2.7-3.4-3.4z" fill="#808080" /><path d="M884.6 125.8C889 123.5 891.5 120 893.2 117.2A4.7 4.7 0 1 1 901 122C898.5 125.5 892 126.3 884.6 125.8z" fill="#4a7ebb" /><path d="M893.9 119.2a3.3 3.3 0 0 1 6 2.8q-0.9 1.9-2.6 1.8z" fill="#fff" /><rect x="962.5" y="88.5" width="33" height="28" fill="#fff" /><rect x="970" y="96" width="17" height="12" fill="#c0d5eb" /><path d="M969.5 89v27 M987.5 89v27 M963 95.5h32 M963 108.5h32" fill="none" stroke="#b4b4b4" stroke-width="1" /><rect x="962.5" y="88.5" width="33" height="28" fill="none" stroke="#777" stroke-width="1" /><path d="M972.6 125.8C977 123.5 979.5 120 981.2 117.2A4.7 4.7 0 1 1 989 122C986.5 125.5 980 126.3 972.6 125.8z" fill="#f3f3f3" stroke="#f3f3f3" stroke-width="2.6" /><path d="M999.9 99.1v9.4l-5.7 4.5-3.4-3.5z" fill="#f3f3f3" stroke="#f3f3f3" stroke-width="2.6" /><path d="M990.4 109.9l3.4 3.4-2.7 2.7-3.4-3.4z" fill="#f3f3f3" stroke="#f3f3f3" stroke-width="2.6" /><path d="M999.9 99.1v9.4l-5.7 4.5-3.4-3.5z" fill="#808080" /><path d="M990.4 109.9l3.4 3.4-2.7 2.7-3.4-3.4z" fill="#808080" /><path d="M972.6 125.8C977 123.5 979.5 120 981.2 117.2A4.7 4.7 0 1 1 989 122C986.5 125.5 980 126.3 972.6 125.8z" fill="#4a7ebb" /><path d="M981.9 119.2a3.3 3.3 0 0 1 6 2.8q-0.9 1.9-2.6 1.8z" fill="#fff" /><path d="M1027.5 87.5h10v3h-10z M1032.5 87.5v3" fill="none" stroke="#777" stroke-width="1" /><rect x="1034.5" y="92.5" width="10" height="4" fill="#c7d9ee" stroke="#777" stroke-width="1" /><path d="M1039.5 92.5v4" fill="none" stroke="#777" stroke-width="1" /><path d="M1033.4 94.6h-5 M1030.2 91.8l-2.8 2.8 2.8 2.8" fill="none" stroke="#3f7fc3" stroke-width="1.7" /><path d="M1027.5 99.5h10v6h-10z M1032.5 99.5v6 M1027.5 102.5h10" fill="none" stroke="#777" stroke-width="1" /><path d="M1098.7 95h7l-3.5 3.7z" fill="#666" /><path d="M1027.5 115.5h10v3h-10z M1032.5 115.5v3" fill="none" stroke="#777" stroke-width="1" /><rect x="1030.5" y="120.5" width="6" height="3" fill="#c7d9ee" stroke="#777" stroke-width="1" /><path d="M1027 120.5h3.5 M1027 123.5h3.5" fill="none" stroke="#777" stroke-width="1" /><path d="M1027.5 125.5h10v6h-10z M1032.5 125.5v6 M1027.5 128.5h10" fill="none" stroke="#777" stroke-width="1" /><path d="M1036.4 118.2l8.8 8 M1044.8 117.8l-8 8.6" fill="none" stroke="#d9532c" stroke-width="2" /><path d="M1101.4 122h7l-3.5 3.7z" fill="#666" /><path d="M1027.5 139.2v4.4 M1041.5 139.2v4.4 M1029 141.4h11 M1030.8 139.6l-1.8 1.8 1.8 1.8 M1038.2 139.6l1.8 1.8-1.8 1.8" fill="none" stroke="#3f7fc3" stroke-width="1" /><rect x="1027.5" y="144.5" width="17" height="13" fill="#fff" stroke="#777" stroke-width="1" /><path d="M1031.5 144.5v13 M1040.5 144.5v13 M1027.5 147.5h17 M1027.5 154.5h17" fill="none" stroke="#b4b4b4" stroke-width="1" /><rect x="1032.5" y="148.2" width="5" height="5" fill="#4a7ebb" /><path d="M1027.5 157.5v2.4h5.2l1.2-2.4 M1034 159.9h4.6l1.4-2.4" fill="none" stroke="#777" stroke-width="1" /><path d="M1113 149h7l-3.5 3.7z" fill="#666" /><path d="M1163.7 95h7l-3.5 3.7z" fill="#666" /><rect x="1139.5" y="114.5" width="16" height="17" fill="#fff" stroke="#777" stroke-width="1" /><rect x="1139" y="114" width="17" height="3" fill="#777" /><path d="M1147.5 119v8.6 M1143.6 124.2l3.9 3.9 3.9-3.9" fill="none" stroke="#4a7ebb" stroke-width="2.5" /><path d="M1161.5 122h7l-3.5 3.7z" fill="#666" /><path d="M1149.3 141.8l6.7 4.9-9.4 11.3-6.5-5.9z" fill="#e8899a" /><path d="M1142.2 149.8l6.6 5.6" fill="none" stroke="#f3f3f3" stroke-width="1.1" /><path d="M1161.5 149h7l-3.5 3.7z" fill="#666" /><path d="M1209 97h18.2l-6.8 8.6v8.2h-4.6v-8.2z" fill="#777" /><rect x="1217.2" y="106.4" width="1.8" height="6.2" fill="#f3f3f3" /><path d="M1233.8 157h7l-3.5 3.7z" fill="#666" /><path d="M1320.8 157h7l-3.5 3.7z" fill="#666" /><circle cx="1292.2" cy="101.8" r="10.4" fill="#fff" stroke="#4a7ebb" stroke-width="2.4"/><path d="M1284.4 110.2l-10.6 10.6" fill="none" stroke="#4a7ebb" stroke-width="4.2" stroke-linecap="round"/><path d="M1416.5 183l5-5 5 5" fill="none" stroke="#666" stroke-width="1.6" /><path d="M116.6 217.4h7l-3.5 3.7z" fill="#666" /><path d="M186.4 212.6l11.6 11.6 M198 212.6l-11.6 11.6" fill="none" stroke="#bcbcbc" stroke-width="1.8" /><path d="M231.4 219l4.6 4.8 9-11" fill="none" stroke="#c4c4c4" stroke-width="2.6" /><path d="M1417.6 216l4.4 4.4 4.4-4.4" fill="none" stroke="#5a5a5a" stroke-width="2.5" /><path d="M1100.5 722.5h16v15h-16z M1105.5 722.5v15 M1111.5 722.5v15 M1100.5 727.5h16 M1100.5 732.5h16" fill="none" stroke="#6a6a6a" stroke-width="1" /><path d="M1142.5 722.5h16v15h-16z M1146.5 726.5h8v8h-8z M1148 729.5h5 M1148 731.5h5" fill="none" stroke="#6a6a6a" stroke-width="1" /><path d="M1184.5 722.5h16v15h-16z M1189.5 722.5v7 M1195.5 722.5v7 M1184.5 729.5h11" fill="none" stroke="#6a6a6a" stroke-width="1" /></svg>
<div style="left:1438px;top:0px;width:1px;height:740px;background:#217346;"></div>
</div>
</body>
</html>
